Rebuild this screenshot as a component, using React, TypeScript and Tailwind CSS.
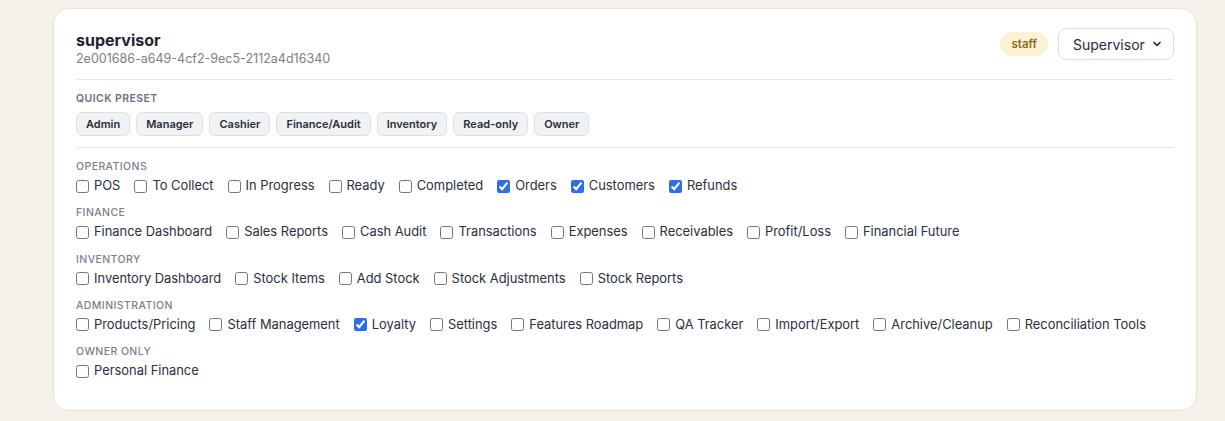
import React from "react";

const presets = ["Admin", "Manager", "Cashier", "Finance/Audit", "Inventory", "Read-only", "Owner"];

const sections: { title: string; items: [string, boolean][] }[] = [
  {
    title: "Operations",
    items: [
      ["POS", false],
      ["To Collect", false],
      ["In Progress", false],
      ["Ready", false],
      ["Completed", false],
      ["Orders", true],
      ["Customers", true],
      ["Refunds", true],
    ],
  },
  {
    title: "Finance",
    items: [
      ["Finance Dashboard", false],
      ["Sales Reports", false],
      ["Cash Audit", false],
      ["Transactions", false],
      ["Expenses", false],
      ["Receivables", false],
      ["Profit/Loss", false],
      ["Financial Future", false],
    ],
  },
  {
    title: "Inventory",
    items: [
      ["Inventory Dashboard", false],
      ["Stock Items", false],
      ["Add Stock", false],
      ["Stock Adjustments", false],
      ["Stock Reports", false],
    ],
  },
  {
    title: "Administration",
    items: [
      ["Products/Pricing", false],
      ["Staff Management", false],
      ["Loyalty", true],
      ["Settings", false],
      ["Features Roadmap", false],
      ["QA Tracker", false],
      ["Import/Export", false],
      ["Archive/Cleanup", false],
      ["Reconciliation Tools", false],
    ],
  },
  {
    title: "Owner Only",
    items: [["Personal Finance", false]],
  },
];

export default function App() {
  return (
    <div
      className="min-h-[421px] w-full bg-[#f6f1e9] pl-[53px] pr-[28px] pt-[8px] pb-[11px]"
      style={{ fontFamily: "Inter, 'Noto Sans', sans-serif" }}
    >
      <div className="rounded-[16px] border border-[#e7e1d6] bg-white px-[22px] pt-[21px] pb-[30px]">
        <div className="flex items-start justify-between">
          <div>
            <div className="text-[16px] font-bold leading-[20px] text-[#1f2330]">supervisor</div>
            <div className="mt-[0px] text-[12.5px] leading-[17px] text-[#7b7f88]">
              2e001686-a649-4cf2-9ec5-2112a4d16340
            </div>
          </div>
          <div className="-mt-[2px] flex items-center gap-[10px]">
            <span className="rounded-full bg-[#fdf2d3] px-[11px] py-[4px] text-[11.5px] font-semibold leading-[16px] text-[#8a6a1c]">
              staff
            </span>
            <div className="flex h-[32px] w-[116px] items-center justify-between rounded-[8px] border border-[#dcdde2] bg-white pl-[14px] pr-[10px]">
              <span className="text-[14px] text-[#1f2b45]">Supervisor</span>
              <svg width="12" height="12" viewBox="0 0 24 24" fill="none" stroke="#1f2b45" strokeWidth="3.5" strokeLinecap="round" strokeLinejoin="round">
                <path d="M6 9l6 6 6-6" />
              </svg>
            </div>
          </div>
        </div>

        <div className="mt-[12px] border-t border-[#e5e6ea]" />

        <div className="pt-[12px] pb-[11px]">
          <div className="text-[10.5px] font-semibold uppercase leading-[14px] tracking-[0.04em] text-[#6b7080]">
            Quick Preset
          </div>
          <div className="mt-[6px] flex gap-[6px]">
            {presets.map((p) => (
              <button
                key={p}
                className="h-[24px] rounded-[6px] border border-[#e0e1e5] bg-[#f1f2f4] px-[9px] text-[11px] font-semibold leading-[22px] text-[#2a2f3b]"
              >
                {p}
              </button>
            ))}
          </div>
        </div>

        <div className="border-t border-[#e5e6ea]" />

        <div className="flex flex-col gap-[11.25px] pt-[12px]">
          {sections.map((s) => (
            <div key={s.title}>
              <div className="text-[10.5px] font-medium uppercase leading-[14px] tracking-[0.04em] text-[#7b7f8c]">
                {s.title}
              </div>
              <div className="mt-[3px] flex flex-wrap gap-x-[14px]">
                {s.items.map(([label, checked]) => (
                  <label key={label} className="flex items-center gap-[5px] text-[12.9px] leading-[18px] text-[#2b3040]">
                    <input
                      type="checkbox"
                      defaultChecked={checked}
                      className="m-0 h-[13px] w-[13px] accent-[#2f6fe4]"
                    />
                    <span>{label}</span>
                  </label>
                ))}
              </div>
            </div>
          ))}
        </div>
      </div>
    </div>
  );
}
